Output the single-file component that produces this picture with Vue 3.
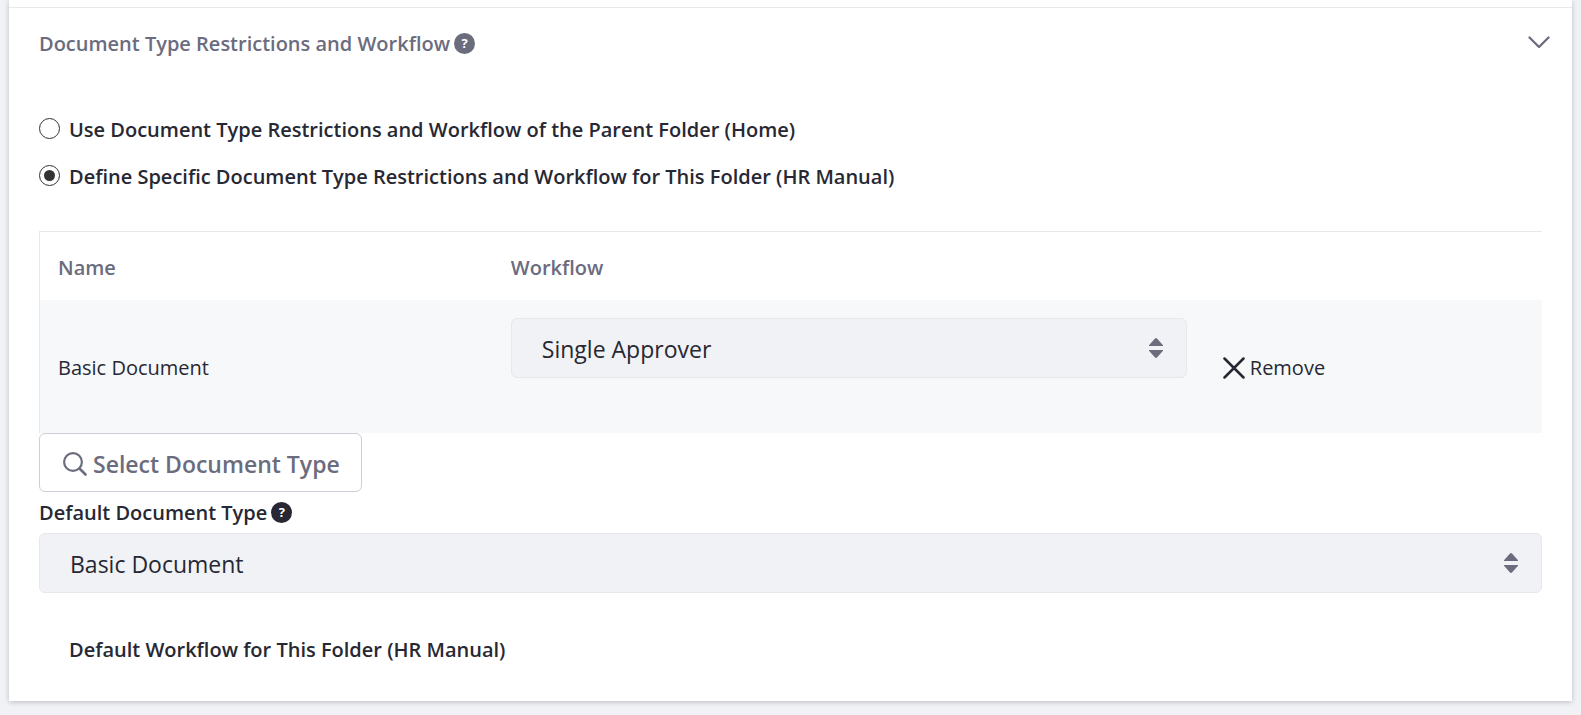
<script setup>
import { ref } from 'vue'

const expanded = ref(true)
const restriction = ref('specific')
const workflow = ref('Single Approver')
const defaultType = ref('Basic Document')

const modes = [
  { value: 'parent', label: 'Use Document Type Restrictions and Workflow of the Parent Folder (Home)' },
  { value: 'specific', label: 'Define Specific Document Type Restrictions and Workflow for This Folder (HR Manual)' },
]
</script>

<template>
  <main class="sheet">
    <section class="panel">
      <header class="panel-header">
        <h3 class="panel-title">
          Document Type Restrictions and Workflow
          <span class="help" role="img" aria-label="Help">?</span>
        </h3>
        <button class="toggle" type="button" aria-label="Collapse" :aria-expanded="expanded" @click="expanded = !expanded">
          <svg viewBox="0 0 22 22" width="22" height="22" aria-hidden="true">
            <path d="M1.500 6.500 11 16l9.500-9.500" fill="none" stroke="currentColor" stroke-width="2.300" stroke-linecap="round" stroke-linejoin="round" />
          </svg>
        </button>
      </header>

      <div v-show="expanded" class="panel-body">
        <div class="modes">
          <label v-for="mode in modes" :key="mode.value" class="mode">
            <input v-model="restriction" class="radio" type="radio" name="restriction" :value="mode.value" />
            <span>{{ mode.label }}</span>
          </label>
        </div>

        <table class="types">
          <thead>
            <tr>
              <th class="col-name" scope="col">Name</th>
              <th class="col-workflow" scope="col">Workflow</th>
              <th></th>
            </tr>
          </thead>
          <tbody>
            <tr>
              <td>Basic Document</td>
              <td class="cell-select">
                <div class="select-box">
                  <select v-model="workflow" class="select" aria-label="Workflow">
                    <option>Single Approver</option>
                    <option>No Workflow</option>
                  </select>
                  <svg class="carets" viewBox="0 0 14 20" width="14" height="20" aria-hidden="true">
                    <path d="M.4 8h13.2a.4.4 0 0 0 .2-.9L8.2.8a1.6 1.6 0 0 0-2.4 0L.2 7.1A.4.4 0 0 0 .4 8zM.4 12h13.2a.4.4 0 0 1 .2.9l-5.600 6.300a1.600 1.600 0 0 1-2.400 0L.2 12.900A.4.4 0 0 1 .4 12z" fill="currentColor" />
                  </svg>
                </div>
              </td>
              <td>
                <a class="remove" href="#remove">
                  <svg viewBox="0 0 22 22" width="22" height="22" aria-hidden="true">
                    <path d="M1.500 1.500l19 19M20.500 1.500l-19 19" fill="none" stroke="currentColor" stroke-width="2.500" stroke-linecap="round" />
                  </svg>
                  <span>Remove</span>
                </a>
              </td>
            </tr>
          </tbody>
        </table>

        <button class="pick" type="button">
          <svg viewBox="0 0 24 24" width="24" height="24" aria-hidden="true">
            <circle cx="10" cy="10" r="8.900" fill="none" stroke="currentColor" stroke-width="2.200" />
            <path d="M16.500 16.500l6 6" fill="none" stroke="currentColor" stroke-width="2.600" stroke-linecap="round" />
          </svg>
          <span>Select Document Type</span>
        </button>

        <div class="field-label">
          <label for="default-type">Default Document Type</label>
          <span class="help" role="img" aria-label="Help">?</span>
        </div>
        <div class="select-box">
          <select id="default-type" v-model="defaultType" class="select">
            <option>Basic Document</option>
          </select>
          <svg class="carets" viewBox="0 0 14 20" width="14" height="20" aria-hidden="true">
            <path d="M.4 8h13.2a.4.4 0 0 0 .2-.9L8.2.8a1.6 1.6 0 0 0-2.4 0L.2 7.1A.4.4 0 0 0 .4 8zM.4 12h13.2a.4.4 0 0 1 .2.9l-5.600 6.300a1.600 1.600 0 0 1-2.400 0L.2 12.900A.4.4 0 0 1 .4 12z" fill="currentColor" />
          </svg>
        </div>

        <p class="default-workflow">Default Workflow for This Folder (HR Manual)</p>
      </div>
    </section>
  </main>
</template>

<style>
body {
  background: #f1f2f5;
}
</style>

<style scoped>
.sheet {
  margin: 0 9px 14px;
  padding-top: 7px;
  background: #fff;
  box-shadow: 0 1px 5px rgba(39, 40, 51, 0.26);
  color: #272833;
  font-family: "Segoe UI", "Open Sans", "Noto Sans", sans-serif;
  font-size: 20px;
  line-height: 32px;
}

.sheet * {
  box-sizing: border-box;
}

.panel {
  border-top: 1px solid #e7e7ed;
}

.panel-header {
  display: flex;
  align-items: center;
  justify-content: space-between;
  height: 71px;
  padding: 0 22px 0 30px;
  color: #6b6c7e;
}

.panel-title {
  display: flex;
  align-items: center;
  gap: 4px;
  margin: 0;
  font-size: 20px;
  font-weight: 600;
}

.help {
  display: inline-flex;
  align-items: center;
  justify-content: center;
  width: 21px;
  height: 21px;
  border-radius: 50%;
  background: #6b6c7e;
  color: #fff;
  font-size: 13px;
  font-weight: 700;
  line-height: 21px;
}

.toggle {
  display: flex;
  padding: 0 0 4px;
  border: 0;
  background: none;
  color: #6b6c7e;
}

.panel-body {
  padding: 35px 30px;
}

.modes {
  display: grid;
  gap: 15px;
  margin-bottom: 38px;
}

.mode {
  display: flex;
  align-items: center;
  gap: 9px;
  font-weight: 600;
}

.radio {
  display: grid;
  place-items: center;
  width: 21px;
  height: 21px;
  margin: 0 0 4px;
  border: 1px solid #333;
  border-radius: 50%;
  background: #fff;
  appearance: none;
}

.radio:checked::before {
  content: "";
  width: 11px;
  height: 11px;
  border-radius: 50%;
  background: #333;
}

.types {
  width: 100%;
  border-top: 1px solid #e7e7ed;
  border-left: 1px solid #e7e7ed;
  border-spacing: 0;
  table-layout: fixed;
}

.types th,
.types td {
  padding: 18px;
  text-align: left;
}

.types th {
  height: 68px;
  padding: 20px 18px 16px;
  color: #6b6c7e;
  font-weight: 600;
}

.types td {
  height: 133px;
  padding-top: 20px;
  background: #f7f8fa;
}

.types .cell-select {
  padding-top: 18px;
  vertical-align: top;
}

.col-name {
  width: 30.15%;
}

.col-workflow {
  width: 47.4%;
}

.select-box {
  position: relative;
}

.select {
  display: block;
  width: 100%;
  height: 60px;
  padding: 2px 60px 0 30px;
  border: 1px solid #e7e7ed;
  border-radius: 6px;
  background: #f1f2f5;
  color: #272833;
  font: inherit;
  font-size: 23px;
  appearance: none;
}

.carets {
  position: absolute;
  top: 20px;
  right: 24px;
  color: #6b6c7e;
  pointer-events: none;
}

.remove {
  display: flex;
  align-items: center;
  gap: 5px;
  color: #272833;
  text-decoration: none;
}

.pick {
  display: flex;
  align-items: center;
  gap: 6px;
  height: 59px;
  padding: 2px 21px 0 23px;
  border: 1px solid #cdced9;
  border-radius: 6px;
  background: #fff;
  color: #6b6c7e;
  font: inherit;
  font-size: 23px;
  font-weight: 600;
}

.field-label {
  display: flex;
  align-items: center;
  gap: 4px;
  height: 41px;
  font-weight: 600;
}

.field-label .help {
  background: #272833;
}

.default-workflow {
  margin: 41px 0 0 30px;
  font-weight: 600;
}
</style>
